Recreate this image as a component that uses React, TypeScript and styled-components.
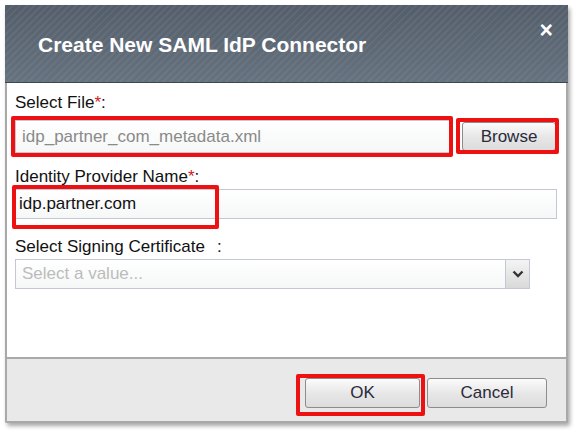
import React from 'react';
import styled, { createGlobalStyle } from 'styled-components';

const GlobalStyle = createGlobalStyle`
  html, body {
    margin: 0;
    padding: 0;
    background: #ffffff;
    font-family: "Liberation Sans", Arial, sans-serif;
  }
  * {
    box-sizing: border-box;
  }
`;

const Page = styled.div`
  width: 579px;
  height: 437px;
  padding: 5px 0 0 5px;
`;

const Dialog = styled.div`
  width: 563px;
  height: 418px;
  display: flex;
  flex-direction: column;
  border: 2px solid #a9a9a9;
  border-top: none;
  border-radius: 2px;
  background: #e9e9e9;
  box-shadow: 2px 3px 4px rgba(0, 0, 0, 0.35);
`;

const Header = styled.div`
  height: 78px;
  margin: 0 -2px;
  display: flex;
  justify-content: space-between;
  align-items: flex-start;
  padding: 0 15px 0 33px;
  border-bottom: 1px solid #3e4650;
  background:
    repeating-linear-gradient(
      135deg,
      rgba(255, 255, 255, 0.05) 0px,
      rgba(255, 255, 255, 0.05) 2px,
      rgba(0, 0, 0, 0) 2px,
      rgba(0, 0, 0, 0) 5px
    ),
    linear-gradient(180deg, #545e6b 0%, #66727f 100%);
`;

const Title = styled.h1`
  margin: 28px 0 0;
  font-size: 21px;
  font-weight: bold;
  color: #ffffff;
`;

const Close = styled.span`
  margin-top: 14px;
  font-size: 23px;
  font-weight: bold;
  line-height: 22px;
  color: #ffffff;
`;

const Body = styled.div`
  flex: 1;
  background: #ffffff;
  padding: 10px 8px 0 8px;
  border-bottom: 2px solid #a9a9a9;
`;

const Label = styled.div<{ $gap?: number }>`
  font-size: 17px;
  line-height: 20px;
  color: #111;
  margin-top: ${p => p.$gap ?? 0}px;
`;

const Star = styled.span`
  color: #d02020;
`;

const Colon = styled.span`
  margin-left: 12px;
`;

const Row = styled.div<{ $gap?: number }>`
  display: flex;
  align-items: center;
  gap: 12px;
  margin-top: ${p => p.$gap ?? 0}px;
`;

const Field = styled.div<{ $width: number; $height?: number; $pad?: number }>`
  position: relative;
  width: ${p => p.$width}px;
  height: ${p => p.$height ?? 30}px;
  display: flex;
  align-items: center;
  padding: 0 ${p => p.$pad ?? 6}px;
  border: 1px solid #c3c8d4;
  background: linear-gradient(180deg, #ffffff 0%, #f6f7f7 100%);
  font-size: 17px;
`;

const FieldText = styled.span<{ $tone?: 'muted' | 'placeholder' }>`
  color: ${p => (p.$tone === 'placeholder' ? '#bcbcbc' : p.$tone === 'muted' ? '#8a8a8a' : '#111')};
`;

/* red annotation frame laid over a control */
const Mark = styled.div<{ $t: number; $r: number; $b: number; $l: number }>`
  position: absolute;
  top: ${p => p.$t}px;
  right: ${p => p.$r}px;
  bottom: ${p => p.$b}px;
  left: ${p => p.$l}px;
  border: 4px solid #ee1111;
  border-radius: 2px;
  pointer-events: none;
`;

const Arrow = styled.div`
  position: absolute;
  right: 0;
  top: 0;
  bottom: 0;
  width: 24px;
  display: flex;
  align-items: center;
  justify-content: center;
  border-left: 1px solid #c3c8d4;
  background: linear-gradient(180deg, #f4f4f4 0%, #d9d9d9 100%);
`;

const ButtonWrap = styled.div`
  position: relative;
  display: flex;
`;

const Button = styled.button<{ $width: number; $height?: number }>`
  width: ${p => p.$width}px;
  height: ${p => p.$height ?? 30}px;
  border: 1px solid #8c8c8c;
  border-radius: 3px;
  background: linear-gradient(180deg, #fbfbfb 0%, #e6e6e6 55%, #dcdcdc 100%);
  font-family: "Liberation Sans", Arial, sans-serif;
  font-size: 17px;
  color: #2a2a3a;
  padding: 0;
`;

const Footer = styled.div`
  height: 62px;
  display: flex;
  justify-content: flex-end;
  align-items: flex-start;
  gap: 7px;
  padding: 19px 19px 0 0;
`;

export default function App() {
  return (
    <>
      <GlobalStyle />
      <Page>
        <Dialog>
          <Header>
            <Title>Create New SAML IdP Connector</Title>
            <Close>×</Close>
          </Header>
          <Body>
            <Label>
              Select File<Star>*</Star>:
            </Label>
            <Row $gap={7}>
              <Field $width={435} $height={33}>
                <FieldText $tone="muted">idp_partner_com_metadata.xml</FieldText>
                <Mark $t={-5} $r={-4} $b={-5} $l={-5} />
              </Field>
              <ButtonWrap>
                <Button $width={94} $height={29}>Browse</Button>
                <Mark $t={-4} $r={-3} $b={-3} $l={-6} />
              </ButtonWrap>
            </Row>
            <Label $gap={14}>
              Identity Provider Name<Star>*</Star>:
            </Label>
            <Row $gap={2}>
              <Field $width={542} $pad={3}>
                <FieldText>idp.partner.com</FieldText>
                <Mark $t={-5} $r={337} $b={-11} $l={-4} />
              </Field>
            </Row>
            <Label $gap={18}>
              Select Signing Certificate<Colon>:</Colon>
            </Label>
            <Row $gap={2}>
              <Field $width={515}>
                <FieldText $tone="placeholder">Select a value...</FieldText>
                <Arrow>
                  <svg width="12" height="8" viewBox="0 0 12 8">
                    <path d="M1.5 1.5 L6 6 L10.5 1.5" fill="none" stroke="#333" strokeWidth="2.4" />
                  </svg>
                </Arrow>
              </Field>
            </Row>
          </Body>
          <Footer>
            <ButtonWrap>
              <Button $width={115}>OK</Button>
              <Mark $t={-4} $r={-5} $b={-8} $l={-9} />
            </ButtonWrap>
            <Button $width={120}>Cancel</Button>
          </Footer>
        </Dialog>
      </Page>
    </>
  );
}
